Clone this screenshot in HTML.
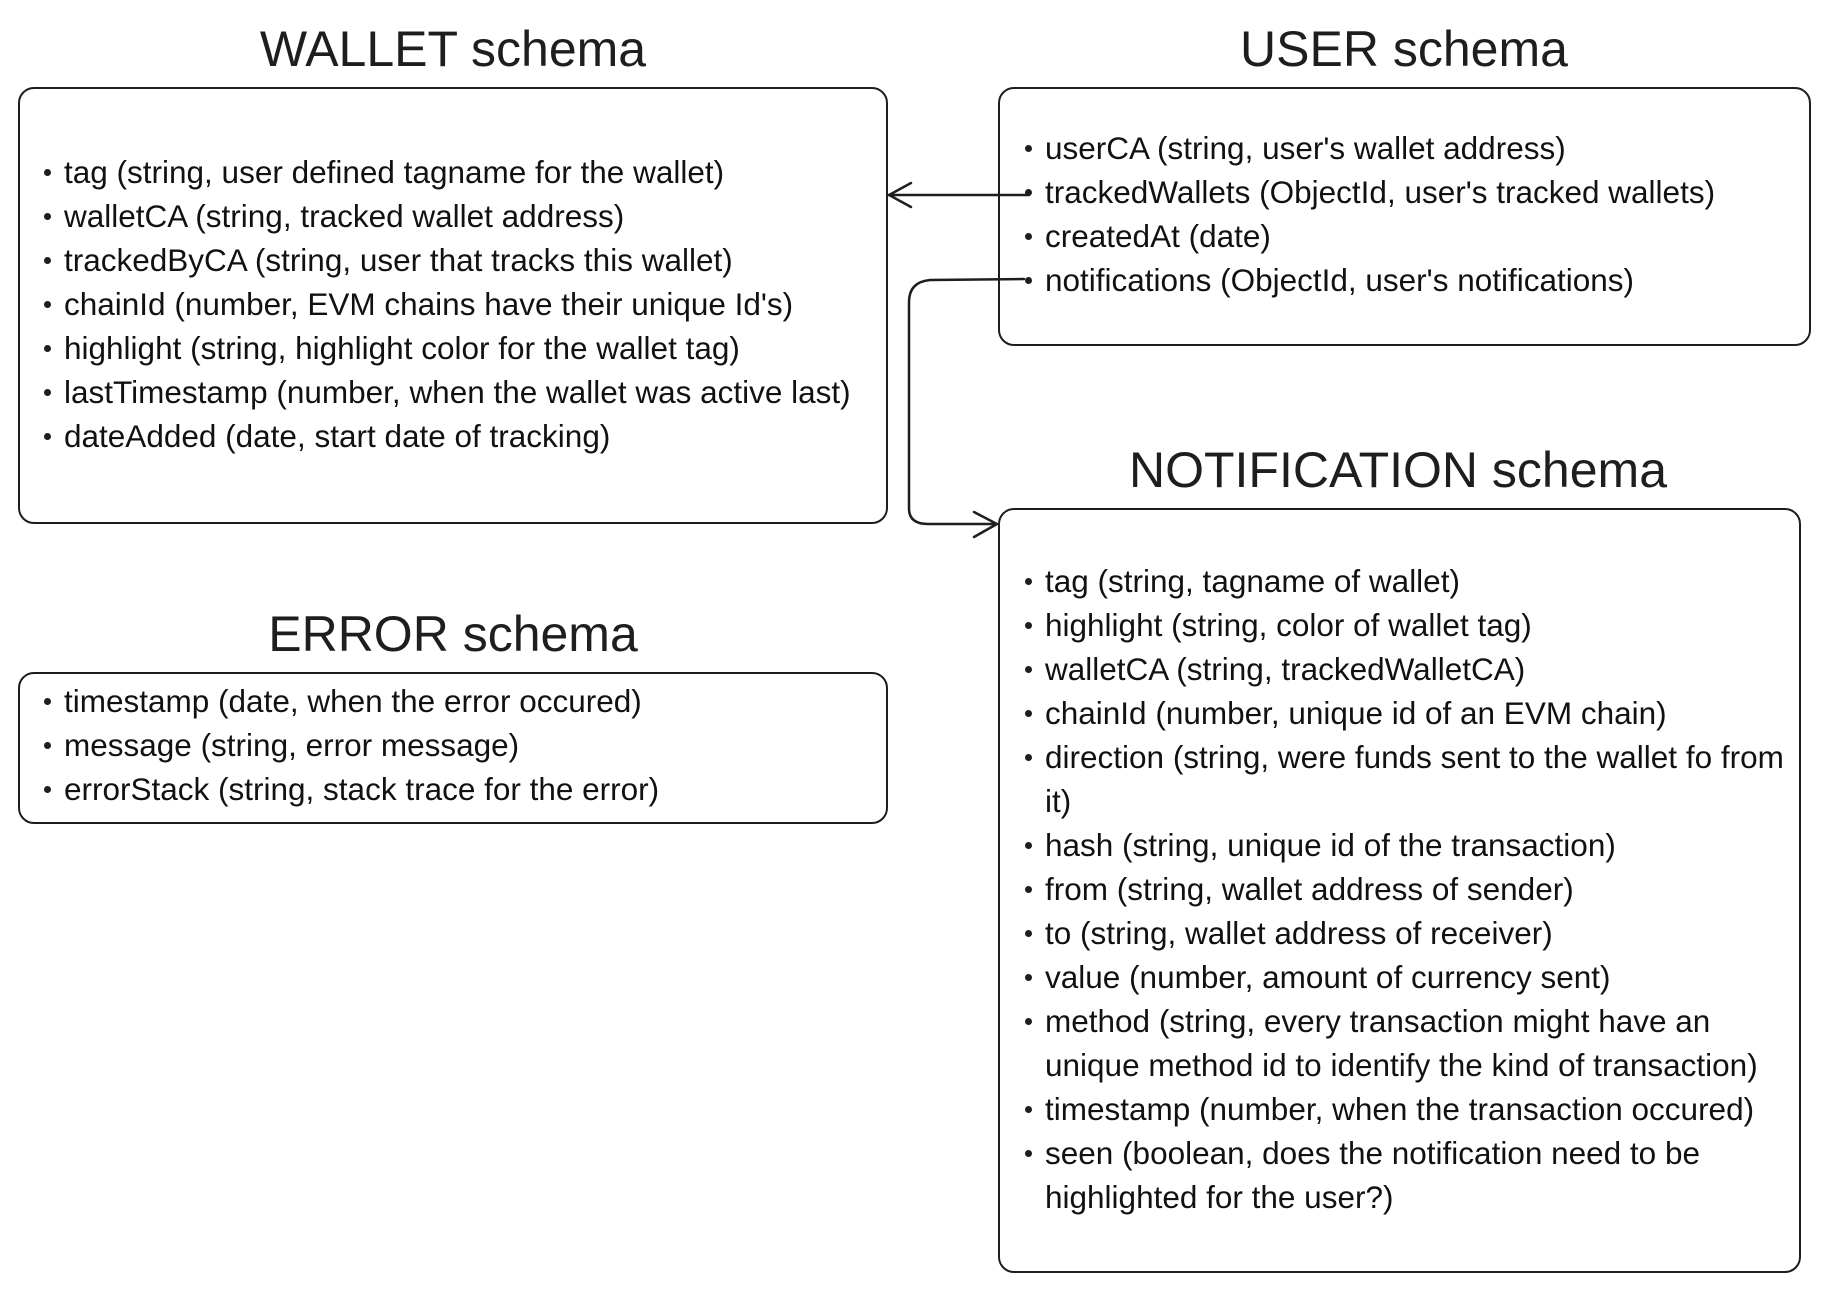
<!DOCTYPE html>
<html><head><meta charset="utf-8"><style>
body{margin:0;width:1830px;height:1293px;background:#fff;position:relative;font-family:"Liberation Sans",sans-serif;color:#1e1e1e;overflow:hidden}
.t{position:absolute;font-size:50px;text-align:center;width:800px;line-height:1}
.b{position:absolute;border:2.5px solid #1e1e1e;border-radius:16px;box-sizing:border-box}
.l{position:absolute;font-size:31.5px;line-height:44px;white-space:nowrap;color:#111}
.l div{position:relative;padding-left:19px}
.l div:before{content:"";position:absolute;left:-1px;top:19px;width:7px;height:7px;border-radius:50%;background:#1e1e1e}
.l div.c:before{display:none}
</style></head><body>
<div class="t" style="left:53px;top:24px">WALLET schema</div>
<div class="t" style="left:1004px;top:24px">USER schema</div>
<div class="t" style="left:998px;top:445px">NOTIFICATION schema</div>
<div class="t" style="left:53px;top:609px">ERROR schema</div>

<div class="b" style="left:18px;top:87px;width:870px;height:437px"></div>
<div class="b" style="left:998px;top:87px;width:813px;height:259px"></div>
<div class="b" style="left:998px;top:508px;width:803px;height:765px"></div>
<div class="b" style="left:18px;top:672px;width:870px;height:152px"></div>

<div class="l" style="left:45px;top:150px">
<div>tag (string, user defined tagname for the wallet)</div>
<div>walletCA (string, tracked wallet address)</div>
<div>trackedByCA (string, user that tracks this wallet)</div>
<div>chainId (number, EVM chains have their unique Id's)</div>
<div>highlight (string, highlight color for the wallet tag)</div>
<div>lastTimestamp (number, when the wallet was active last)</div>
<div>dateAdded (date, start date of tracking)</div>
</div>
<div class="l" style="left:1026px;top:126px">
<div>userCA (string, user's wallet address)</div>
<div>trackedWallets (ObjectId, user's tracked wallets)</div>
<div>createdAt (date)</div>
<div>notifications (ObjectId, user's notifications)</div>
</div>
<div class="l" style="left:1026px;top:559px">
<div>tag (string, tagname of wallet)</div>
<div>highlight (string, color of wallet tag)</div>
<div>walletCA (string, trackedWalletCA)</div>
<div>chainId (number, unique id of an EVM chain)</div>
<div>direction (string, were funds sent to the wallet fo from</div>
<div class="c">it)</div>
<div>hash (string, unique id of the transaction)</div>
<div>from (string, wallet address of sender)</div>
<div>to (string, wallet address of receiver)</div>
<div>value (number, amount of currency sent)</div>
<div>method (string, every transaction might have an</div>
<div class="c">unique method id to identify the kind of transaction)</div>
<div>timestamp (number, when the transaction occured)</div>
<div>seen (boolean, does the notification need to be</div>
<div class="c">highlighted for the user?)</div>
</div>
<div class="l" style="left:45px;top:679px">
<div>timestamp (date, when the error occured)</div>
<div>message (string, error message)</div>
<div>errorStack (string, stack trace for the error)</div>
</div>

<svg width="1830" height="1293" style="position:absolute;left:0;top:0" fill="none" stroke="#1e1e1e" stroke-width="2.5" stroke-linecap="round">
<path d="M1029 195 L888 195 M911 183 L889 195 L911 207"/>
<path d="M1024 279 L930 280 Q909 282 909 302 L909 510 Q910 524 928 524 L997 524 M974 512 L997 524 L974 537"/>
</svg>
</body></html>
